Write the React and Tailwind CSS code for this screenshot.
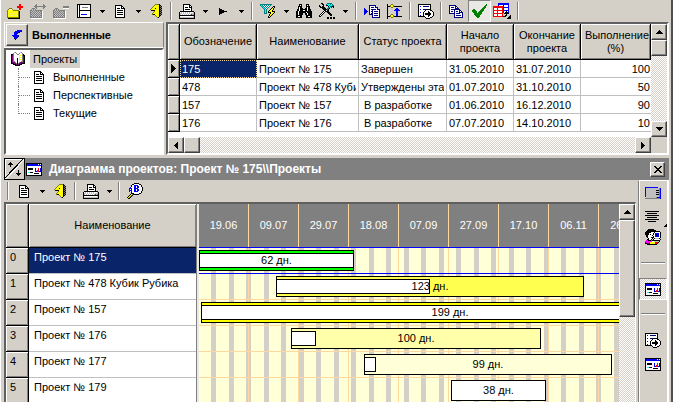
import React from "react";

const PALETTE = {
  k: "#000000", w: "#ffffff", y: "#ffff00", b: "#0000ff", n: "#000080", r: "#ff0000",
  g: "#808080", l: "#c0c0c0", t: "#008080", c: "#00ffff", G: "#008000", m: "#800080",
  M: "#ff00ff", o: "#808000", s: "#d4d0c8", v: "#eeee66",
};

function Pixels({ rows }) {
  const width = Math.max(...rows.map((r) => r.length));
  const rects = [];
  rows.forEach((row, y) => {
    let x = 0;
    while (x < row.length) {
      const ch = row[x];
      let end = x + 1;
      while (end < row.length && row[end] === ch) end += 1;
      if (ch !== ".") {
        rects.push(<rect key={`${x}-${y}`} x={x} y={y} width={end - x} height={1} fill={PALETTE[ch]} />);
      }
      x = end;
    }
  });
  return (
    <svg width={width} height={rows.length} viewBox={`0 0 ${width} ${rows.length}`} shapeRendering="crispEdges" className="shrink-0" aria-hidden="true">
      {rects}
    </svg>
  );
}

const ICONS = {
  newFolder: [
    "............rr..",
    "............rr..",
    "..........rrrrrr",
    "..........rrrrrr",
    "..ooo.......rr..",
    ".oywyo......rr..",
    "oywywyoooooo....",
    "oyyyyyyyyyyok...",
    "oyvyvyvyvyvok...",
    "oyyvyvyvyvyok...",
    "oyvyvyvyvyvok...",
    "oyyvyvyvyvyok...",
    "oyyyyyyyyyyok...",
    "ooooooooooook...",
    ".kkkkkkkkkkkk...",
  ],
  moveFolder: [
    "......g......g..",
    ".....gg......gg.",
    "....gggggggggggg",
    ".....gg......gg.",
    "..ggg.g......g..",
    ".glglg..........",
    "gglglggggggg....",
    "glglglglglggw...",
    "gglglglglglgw...",
    "glglglglglggw...",
    "gglglglglglgw...",
    "glglglglglggw...",
    "gglglglglglgw...",
    "ggggggggggggw...",
    ".wwwwwwwwwwww...",
  ],
  removeFolder: [
    "................",
    "................",
    "..........gggggg",
    "..........gggggg",
    "..ggg.....wwwwww",
    ".glglg..........",
    "gglglggggggg....",
    "glglglglglggw...",
    "gglglglglglgw...",
    "glglglglglggw...",
    "gglglglglglgw...",
    "glglglglglggw...",
    "gglglglglglgw...",
    "ggggggggggggw...",
    ".wwwwwwwwwwww...",
  ],
  form: [
    "kkkkkkkkkkkkkk",
    "kwkwwwwwwwwwwk",
    "kwkwwwwwwwwwwk",
    "kwkwwggggggwwk",
    "kwkwwwwwwwwwwk",
    "kwkwwwwwwwwwwk",
    "kwkkkkkkkkkkkk",
    "kwkwwwwwwwwwwk",
    "kwkwwwwwwwwwwk",
    "kwkwwwwwwwwwwk",
    "kwkwbbbbbbwwwk",
    "kwkwwwwwwwwwwk",
    "kwkwwwwwwwwwwk",
    "kkkkkkkkkkkkkk",
  ],
  doc: [
    "kkkkkkk...",
    "kwwwwwkk..",
    "kwwwwwkwk.",
    "kwkkkwkkkk",
    "kwwwwwwwwk",
    "kwkkkkkkwk",
    "kwwwwwwwwk",
    "kwkkkkkkwk",
    "kwwwwwwwwk",
    "kwkkkkkkwk",
    "kwwwwwwwwk",
    "kwwwwwwwwk",
    "kkkkkkkkkk",
  ],
  exit: [
    ".....ooook..",
    "....oyyyykk.",
    "...oyyyyykgk",
    "..oyyyyyykkg",
    ".oyyykyyykgk",
    "oyyyyyyyykkg",
    ".kkkkyyyykgk",
    "....oyyyykkg",
    "...oyyyyykgk",
    "..oyyyyyykkg",
    "..okkyyyykgk",
    ".....oyyykk.",
    "......oyyk..",
    ".......ok...",
  ],
  printer: [
    "....kkkkkkk.....",
    "....kwwwwwkk....",
    "....kwwwwwkwk...",
    "....kwkkkwkkk...",
    "....kwwwwwwwk...",
    "....kwkkkkkwk...",
    "....kwwwwwwwk...",
    ".kkkkkkkkkkkkkk.",
    "kwlwlwlwlwlwwwlk",
    "kllwlwlwlwlwlllk",
    "klwlwlwlwlwlrlgk",
    "kkkkkkkkkkkkkkkk",
    "kwwwwwwwwwwwwwlk",
    "kllllllllllllllk",
    "kkkkkkkkkkkkkkkk",
  ],
  play: [
    "k.......",
    "kkk.....",
    "kkkkk...",
    "kkkkkkkk",
    "kkkkk...",
    "kkk.....",
    "k.......",
  ],
  filter: [
    "tttttttttttt....",
    "tctwtwtwtwt.....",
    ".tctwtwtwt...kk.",
    "..tctwtwt...kyk.",
    "...tctwt...kyk..",
    "....tct...kyyk..",
    "....tct..kyyk...",
    "....tct.kyyykkk.",
    "....tct.kkkyyyk.",
    "....ttt...kyyk..",
    ".........kyyk...",
    ".........kyk....",
    "........kyk.....",
    "........kk......",
  ],
  binoculars: [
    "...kkk....kkk...",
    "...kwk....kwk...",
    "..kkkk....kkkk..",
    "..kwkk....kwkk..",
    "..kwkkk..kkwkk..",
    ".kkwkkkkkkkwkkk.",
    ".kkwkkkwwkkwkkk.",
    "kkwkkkkkkkkkkkkk",
    "kkwkkkkkkkwkkkkk",
    "kkwkkkk..kkwkkkk",
    "kkwkkkk..kkwkkkk",
    "kkkkkk....kkkkkk",
    "kkwwkk....kkwwkk",
    "kkkkkk....kkkkkk",
  ],
  tools: [
    "..kk....ttttt...",
    "...kk..tccctct..",
    "k...k..kkctcctt.",
    "kk.kk....kcttkk.",
    ".kkkkk...ttck.k.",
    "...kkkk.ttk.....",
    "....kkkktk......",
    ".....kkwkk......",
    "....kwkkkk......",
    "...kwk..kkk.....",
    "..kwk....kkk....",
    ".kwk......kkk...",
    "kwk........kk...",
    "kk..............",
    "........kk.kk.kk",
    "........kk.kk.kk",
  ],
  pages: [
    ".....nnnnnnn....",
    ".....nwwwwwn....",
    ".....nwnnnwnnn..",
    "b....nwwwwwwwn..",
    "bb...nwnnnnnwnnn",
    "bbb..nwwnwwwwwwn",
    "bbbb.nwnnwnnnnwn",
    "bbb..nwwnwwwwwwn",
    "bb...nwnnwnnnnwn",
    "b....nnnnwwwwwwn",
    "........nwnnnnwn",
    "........nwwwwwwn",
    "........nnnnnnnn",
  ],
  tree: [
    "k...oo.........",
    "k..oyyo........",
    "kkkoyyokkkkkkkk",
    "k...oo.........",
    "k........bb....",
    "k.......bbbb...",
    "k......bbbbbb..",
    "k........bb....",
    "k........bb....",
    "k........bb....",
    "k...oo...bb....",
    "k..oyyo..bb....",
    "kkkoyyokkkkkkkk",
    "k...oo.........",
    "k..............",
  ],
  report: [
    "kkkkkkkkkkkkk...",
    "kwwwwwwwwwwwk...",
    "kwbwwnnnnnnwk...",
    "kwwwwwwwwwwwk...",
    "kwwwwwwwwwwwk...",
    "kwbwwnnnkkkkk...",
    "kwwwwwwkwwwwkk..",
    "kwwwwwkwwwkwwwk.",
    "kwbwwkwwwwkkwwwk",
    "kwwwwkwkkkkkkwwk",
    "kwwwwkwkkkkkkwwk",
    "kwbwwkwwwwkkwwwk",
    "kkkkkkkwwwkwwwk.",
    ".......kwwwwkk..",
    "........kkkk....",
  ],
  copy: [
    "nnnnnnn........",
    "nwwwwwnn.......",
    "nwnnnwnwn......",
    "nwwwwwnnnn.....",
    "nwnnnnnnnnn....",
    "nwwwwnwwwwnn...",
    "nwnnwnwnnwnwn..",
    "nwwwwnwwwwnnnn.",
    "nnnnnnwnnnnwwn.",
    ".....nwwwwwwwn.",
    ".....nwnnnnnwn.",
    ".....nwwwwwwwn.",
    ".....nnnnnnnnn.",
  ],
  check: [
    "..............G",
    ".............GG",
    "............GG.",
    "...........GGG.",
    "..........GGG..",
    ".GG......GGG...",
    "GGGG....GGGG...",
    "GGGGG..GGGG....",
    ".GGGG.GGGG.....",
    "..GGGGGGGG.....",
    "..GGGGGGG......",
    "...GGGGG.......",
    "....GGGG.......",
    ".....GG........",
  ],
  tables: [
    ".....bbbbbbbbbbb...",
    ".....bbbbbbbbbbb...",
    ".....bwwwwbwwwwb...",
    "rrrrrrrrrrbwwwwb...",
    "rrrrrrrrrrbbbbbb...",
    "rwwwrwwwwrbwwwwb...",
    "rwwwrwwwwrbwwwwb...",
    "rrrrrrrrrrbbbbbb...",
    "rwwwrwwwwrbwwkwb...",
    "rwwwrwwwwrbwkkkb...",
    "rrrrrrrrrr.kkkkk...",
    "rwwwrwwwwr...k.....",
    "rwwwrwwwwr..kk...k.",
    "rrrrrrrrrrkkk...kk.",
    "...............kkk.",
    "..............kkkk.",
  ],
  book: [
    "....lg....lg...",
    "...gwwg..gwwg..",
    ".kkgwwwggwwwgk.",
    ".kmgwwwwwyywgkk",
    ".kmgwwwwwywwgmk",
    ".kmgwwwwwyywgmk",
    ".kmgwwwkwywwgmk",
    ".kmgwwwkwyywgmk",
    ".kmgwwwkwywwgmk",
    ".kmggwwkwwwggmk",
    ".kmmmgwkwgmmmmk",
    ".kkkmmgkgmmkkkk",
    "...kkkmkmkkk...",
    ".....kkkkk.....",
  ],
  funnelArrow: [
    ".....bbbbb.",
    "...bbbbbbn.",
    "..bbbbnn...",
    "..bbbn.....",
    "..bbb......",
    "bbbbbbb....",
    ".bbbbbn....",
    "..bbbn.....",
    "..nbb......",
    "...n.......",
  ],
  chart: [
    "kkkkkkkkkkkkkkkk",
    "kbbbbbbbbbbbwbwk",
    "kbbbbbbbbbbbbbbk",
    "kwwwwwwwwwwwwwwk",
    "kwwwwwwwwwwwwwwk",
    "kwkkkkkwwbwwrwbk",
    "kwkkkkkwwbwwrwbk",
    "kwwwwwwwwbwrrwbk",
    "kwwwwwwwwbbrrbbk",
    "kwcckkkwwwwwwwwk",
    "kwwwwwwwkkkkkwwk",
    "kwwwwwwwwwwwwwwk",
    "kkkkkkkkkkkkkkkk",
  ],
  find: [
    ".......kkkkk....",
    ".....kkwwwwwkk..",
    "....kwwbbbbwwwk.",
    "....kwwbbwbbwwk.",
    "...bwwwbbwbbwwwk",
    "..bbbwwbbbbwwwwk",
    "..bwbwwbbwbbwwwk",
    "..bbbwwbbwbbwwwk",
    "..bwbwwbbbbwwwk.",
    "....kwwwwwwwwwk.",
    "....kkkwwwwwkk..",
    "...kyokkkkkk....",
    "..kyok..........",
    ".kyok...........",
    "kyok............",
    ".kk.............",
  ],
  card: [
    "bbbbbbbbbbbbb...",
    "blllllllllllllgb",
    "blllllllllllllgb",
    "bllllllllllkkkgb",
    "blllllllllllllgb",
    "bllllllllllkkkgb",
    "blllllllllllllgb",
    "bllllllllllkkkgb",
    "blllllllllllllgb",
    "blllllllllllllgb",
    ".llllllllllgbbbb",
    "gggggggggggggggb",
  ],
  lines: [
    "kkkkkkkkkkkkkk",
    "..............",
    "..kkkkkkkkkk..",
    "..............",
    "kkkkkkkkkkkkkk",
    "..............",
    "..kkkkkkkkkk..",
    "..............",
    "kkkkkkkkkkkkkk",
    "..............",
    "...kkkkkkkk...",
  ],
  person: [
    "...kkkkkk.......",
    "..kkkkkkkkk.....",
    ".kkkkkkkkkkkkkk.",
    "kkkkkkwwwkwwwwwk",
    "kkkkwwwwkwbbbbwk",
    "kkkkwkwwkwbnnbwk",
    ".kkwwwwkwwbnnbwk",
    ".kkwwwwwkwbbbbwk",
    "..kwwwkkkwwwwwwk",
    "...kwwwk.kllllk.",
    "..kkwwk.kwwwwwwk",
    ".MMkkkMkkkkkkkk.",
    "MMMMMMMwwlllllk.",
    "mMMMMyyyyyrrrk..",
    "kkmmmyyyyyrrk...",
    "..kkkkkkkkkk....",
  ],
};

const caretRows = ["kkkkk", ".kkk.", "..k.."];

function ToolButton({ icon, label, pressed }) {
  return (
    <button
      type="button"
      aria-label={label}
      className={
        pressed
          ? "flex h-[22px] w-[23px] shrink-0 items-center justify-center border border-b-white border-l-[#808080] border-r-white border-t-[#808080] bg-[#eae8e3]"
          : "flex h-[22px] w-[23px] shrink-0 items-center justify-center"
      }
    >
      <Pixels rows={ICONS[icon]} />
    </button>
  );
}

function Caret({ label }) {
  return (
    <button type="button" aria-label={label} className="flex h-[22px] w-[13px] shrink-0 items-center justify-center pl-px">
      <Pixels rows={caretRows} />
    </button>
  );
}

function Divider() {
  return (
    <div className="flex h-[22px] w-2 shrink-0 items-center justify-center">
      <div className="h-[18px] w-[2px] border-l border-l-[#808080] bg-white" />
    </div>
  );
}

const ARROWS = {
  up: ["...k...", "..kkk..", ".kkkkk.", "kkkkkkk"],
  down: ["kkkkkkk", ".kkkkk.", "..kkk..", "...k..."],
  left: ["...k", "..kk", ".kkk", "kkkk", ".kkk", "..kk", "...k"],
  right: ["k...", "kk..", "kkk.", "kkkk", "kkk.", "kk..", "k..."],
};

function ScrollButton({ dir, label }) {
  return (
    <button
      type="button"
      aria-label={label}
      className="flex size-4 shrink-0 items-center justify-center border border-b-[#404040] border-l-white border-r-[#404040] border-t-white bg-[#d4d0c8] shadow-[inset_-1px_-1px_0_#808080]"
    >
      <Pixels rows={ARROWS[dir]} />
    </button>
  );
}

const track = "bg-[repeating-conic-gradient(#ffffff_0_25%,#d4d0c8_0_50%)] bg-[length:2px_2px]";
const raised = "border border-b-[#404040] border-l-white border-r-[#404040] border-t-white bg-[#d4d0c8] shadow-[inset_-1px_-1px_0_#808080]";
const sunken = "border-2 border-b-white border-l-[#606060] border-r-white border-t-[#606060]";

const treeItems = ["Выполненные", "Перспективные", "Текущие"];

function TreePanel() {
  return (
    <aside className="flex w-40 shrink-0 flex-col">
      <div className="flex h-[26px] shrink-0 items-center border border-l-white border-t-white border-b-white border-r-[#808080] pl-px">
        <button type="button" aria-label="Свернуть" className={`flex size-[22px] shrink-0 items-center justify-center ${raised}`}>
          <Pixels rows={ICONS.funnelArrow} />
        </button>
        <h2 className="pl-1 font-bold">Выполненные</h2>
      </div>
      <div className={`min-h-0 flex-1 bg-white ${sunken}`}>
        <div className="flex h-[18px] items-center pl-1">
          <Pixels rows={ICONS.book} />
          <span className="ml-[5px] flex h-[18px] items-center bg-[#d4d0c8] px-[3px]">Проекты</span>
        </div>
        <ul className="ml-3">
          {treeItems.map((item, i) => (
            <li key={item} className="flex h-[18px]">
              <span className={`w-px border-l border-dotted border-[#808080] ${i === treeItems.length - 1 ? "h-[10px]" : "h-[18px]"}`} />
              <span className="mt-[9px] h-px w-[11px] border-t border-dotted border-[#808080]" />
              <span className="ml-1 flex items-center gap-[9px]">
                <Pixels rows={ICONS.doc} />
                {item}
              </span>
            </li>
          ))}
        </ul>
      </div>
    </aside>
  );
}

const projects = [
  ["175", "Проект № 175", "Завершен", "31.05.2010", "31.07.2010", "100"],
  ["478", "Проект № 478 Кубик", "Утверждены эта", "01.07.2010", "31.10.2010", "50"],
  ["157", "Проект № 157", "\u00a0В разработке", "01.06.2010", "16.12.2010", "90"],
  ["176", "Проект № 176", "\u00a0В разработке", "07.07.2010", "14.10.2010", "10"],
];

const headers = ["Обозначение", "Наименование", "Статус проекта", "Начало проекта", "Окончание проекта", "Выполнение (%)"];

const headCell =
  "h-9 overflow-hidden border-b border-r border-black bg-[#d4d0c8] px-1 text-center font-normal leading-[13px] shadow-[inset_1px_1px_0_#ffffff,inset_-1px_-1px_0_#808080]";

function ProjectsGrid() {
  return (
    <section className={`flex min-w-0 flex-1 flex-col bg-white ${sunken}`}>
      <div className="flex min-h-0 flex-1">
        <div className="min-w-0 flex-1 overflow-hidden">
          <table className="w-full table-fixed border-separate border-spacing-0">
            <colgroup>
              <col className="w-3" />
              <col className="w-[77px]" />
              <col className="w-[102px]" />
              <col className="w-[88px]" />
              <col className="w-[67px]" />
              <col className="w-[67px]" />
              <col />
            </colgroup>
            <thead>
              <tr>
                <th className={headCell} aria-label="Текущая запись" />
                {headers.map((h) => (
                  <th key={h} className={headCell}>{h}</th>
                ))}
              </tr>
            </thead>
            <tbody>
              {projects.map((row, r) => (
                <tr key={row[0]}>
                  <td className="h-[18px] border-b border-r border-black bg-[#d4d0c8] pl-[3px] shadow-[inset_1px_1px_0_#ffffff,inset_-1px_-1px_0_#808080]">
                    {r === 0 && <Pixels rows={["k.....", "kk....", "kkk...", "kkkk..", "kkkkk.", "kkkk..", "kkk...", "kk....", "k....."]} />}
                  </td>
                  {row.map((cell, c) => (
                    <td
                      key={headers[c]}
                      className={
                        r === 0 && c === 0
                          ? "h-[18px] border border-dotted border-[#f5db95] bg-[#0a246a] pl-px text-white"
                          : c === 5
                            ? "h-[18px] border-b border-[#c0c0c0] pr-px text-right"
                            : "h-[18px] border-b border-r border-[#c0c0c0] px-[2px]"
                      }
                    >
                      <div className="h-4 overflow-hidden whitespace-nowrap leading-4">{cell}</div>
                    </td>
                  ))}
                </tr>
              ))}
            </tbody>
          </table>
        </div>
        <div className={`flex w-4 shrink-0 flex-col ${track}`}>
          <ScrollButton dir="up" label="Вверх" />
          <div className={`h-4 ${raised}`} />
          <div className="flex-1" />
          <ScrollButton dir="down" label="Вниз" />
        </div>
      </div>
      <div className="flex h-4 shrink-0">
        <div className={`flex flex-1 ${track}`}>
          <ScrollButton dir="left" label="Влево" />
          <div className={`w-4 ${raised}`} />
          <div className="flex-1" />
          <ScrollButton dir="right" label="Вправо" />
        </div>
        <div className="w-4 bg-[#d4d0c8]" />
      </div>
    </section>
  );
}

const DAY = 2.5;
const tasks = [
  { name: "Проект № 175", start: 0, days: 62, done: 62, fill: "bg-[#00ff00]" },
  { name: "Проект № 478 Кубик Рубика", start: 77, days: 123, done: 61.5, fill: "bg-[#ffff50]" },
  { name: "Проект № 157", start: 2, days: 199, done: 199, fill: "bg-[#ffff00]" },
  { name: "Проект № 176", start: 92, days: 100, done: 10, fill: "bg-[#ffffaa]" },
  { name: "Проект № 177", start: 165, days: 99, done: 4.9, fill: "bg-[#ffffd8]" },
  { name: "Проект № 179", start: 252, days: 38, done: 0, fill: "bg-white" },
];
const dates = ["19.06", "09.07", "29.07", "18.08", "07.09", "27.09", "17.10", "06.11", "26.11"];

function TaskTable() {
  return (
    <table className="w-[190px] shrink-0 table-fixed border-separate border-spacing-0 self-start">
      <colgroup>
        <col className="w-[23px]" />
        <col />
      </colgroup>
      <thead>
        <tr>
          <th className="h-11 border-b border-r border-black bg-[#d4d0c8] shadow-[inset_1px_1px_0_#ffffff,inset_-1px_-1px_0_#808080]" aria-label="Номер" />
          <th className="h-11 border-b border-black bg-[#d4d0c8] text-center font-normal shadow-[inset_1px_1px_0_#ffffff,inset_-1px_-1px_0_#808080]">Наименование</th>
        </tr>
      </thead>
      <tbody>
        {tasks.map((task, i) => (
          <tr key={task.name}>
            <td className="h-[26px] border-b border-r border-black bg-[#d4d0c8] pl-1 pt-px align-top leading-4 shadow-[inset_1px_1px_0_#ffffff,inset_-1px_-1px_0_#808080]">{i}</td>
            <td
              className={
                i === 0
                  ? "h-[26px] border-b border-[#c0c0c0] bg-[#0a246a] pl-[5px] pt-px align-top leading-4 text-white"
                  : "h-[26px] border-b border-[#c0c0c0] bg-white pl-[5px] pt-px align-top leading-4"
              }
            >
              {task.name}
            </td>
          </tr>
        ))}
      </tbody>
    </table>
  );
}

function TaskBar({ task }) {
  const complete = task.done === task.days;
  return (
    <div
      className={`absolute top-[2px] flex h-[21px] items-center justify-center border border-black ${task.fill}`}
      style={{ left: task.start, width: Math.round(task.days * DAY) }}
    >
      {task.done > 0 && (
        <div
          className={`absolute inset-y-[2px] left-0 border-y border-black bg-white ${complete ? "right-0" : "border-r"}`}
          style={complete ? undefined : { width: Math.round(task.done * DAY) - 1 }}
        />
      )}
      <span className="relative">{task.days} дн.</span>
    </div>
  );
}

function Timeline() {
  return (
    <div className="min-w-0 flex-1 overflow-hidden bg-[#ffffd8]">
      <div className="flex h-11 border-b border-b-[#0000ff] bg-[#808080] text-white">
        {dates.map((d) => (
          <div key={d} className="flex w-[50px] shrink-0 items-center justify-center border-r border-[#ffd8a0]">{d}</div>
        ))}
      </div>
      <div className="bg-[linear-gradient(90deg,transparent_49px,#ffd8a0_49px),linear-gradient(90deg,transparent_12px,#d4d0c8_12px,#d4d0c8_17px,transparent_17px,transparent_30px,#d4d0c8_30px,#d4d0c8_35px)] bg-[length:50px_100%,35px_100%]">
        {tasks.map((task, i) => (
          <div key={task.name} className={`relative h-[26px] border-b ${i === 0 ? "border-[#0000ff]" : "border-[#ffd8a0]"}`}>
            <TaskBar task={task} />
          </div>
        ))}
      </div>
    </div>
  );
}

function Sidebar() {
  return (
    <nav className="flex w-[31px] shrink-0 flex-col items-center border-l border-r-2 border-t border-l-[#808080] border-r-white border-t-white shadow-[inset_1px_0_0_#ffffff]">
      <button type="button" aria-label="Карточка" className="flex h-6 w-full shrink-0 items-center justify-center"><Pixels rows={ICONS.card} /></button>
      <button type="button" aria-label="Выравнивание" className="flex h-[22px] w-full shrink-0 items-center justify-end">
        <Pixels rows={ICONS.lines} />
        <span className="flex h-full items-end pl-1"><Pixels rows={["...k", "..kk", ".kkk"]} /></span>
      </button>
      <button type="button" aria-label="Исполнитель" className="flex h-5 w-full shrink-0 items-center justify-center"><Pixels rows={ICONS.person} /></button>
      <div className="mt-[15px] h-[2px] w-6 shrink-0 border-t border-[#808080] bg-white" />
      <button type="button" aria-label="Диаграмма" className={`mt-[14px] flex h-[22px] w-full shrink-0 items-center justify-center border border-b-white border-l-[#808080] border-r-white border-t-[#808080] ${track}`}>
        <Pixels rows={ICONS.chart} />
      </button>
      <div className="mt-[13px] h-[2px] w-6 shrink-0 border-t border-[#808080] bg-white" />
      <button type="button" aria-label="Отчет" className="mt-[14px] flex h-[22px] w-full shrink-0 items-center justify-center"><Pixels rows={ICONS.report} /></button>
      <button type="button" aria-label="Окно диаграммы" className="flex h-[26px] w-full shrink-0 items-center justify-center"><Pixels rows={ICONS.chart} /></button>
    </nav>
  );
}

function SwapButton() {
  return (
    <button type="button" aria-label="Поменять местами" className="shrink-0 bg-black p-px">
      <svg width="19" height="20" viewBox="0 0 19 20" shapeRendering="crispEdges" aria-hidden="true">
        <rect width="19" height="20" fill="#d4d0c8" />
        <path d="M0.5 20V0.5H19" fill="none" stroke="#fff" />
        <path d="M0 19L18 0" stroke="#000" />
        <path d="M1 20L19 1" stroke="#fff" />
        <path d="M5 3h1v5h-1zM4 4h3v1h-3zM3 5h5v1h-5zM13 11h1v6h-1zM11 14h5v1h-5zM12 15h3v1h-3z" fill="#000" />
      </svg>
    </button>
  );
}

export default function App() {
  return (
    <div className="flex h-screen flex-col overflow-hidden border-r-2 border-r-[#505050] bg-[#d4d0c8] font-['Liberation_Sans',Arial,sans-serif] text-[11px] leading-[13px] text-black shadow-[inset_1px_0_0_#ffffff]">
      <header className="flex h-[22px] shrink-0 pl-[3px]">
        <div className="flex">
          <ToolButton icon="newFolder" label="Создать папку" />
          <ToolButton icon="moveFolder" label="Переместить папку" />
          <ToolButton icon="removeFolder" label="Удалить папку" />
          <ToolButton icon="form" label="Форма" />
          <Caret label="Варианты формы" />
          <ToolButton icon="doc" label="Документ" />
          <Caret label="Варианты документа" />
          <ToolButton icon="exit" label="Выход" />
        </div>
        <Divider />
        <div className="flex pr-px">
          <ToolButton icon="printer" label="Печать" />
          <Caret label="Варианты печати" />
          <ToolButton icon="play" label="Выполнить" />
          <Caret label="Варианты выполнения" />
        </div>
        <Divider />
        <div className="flex pr-px">
          <ToolButton icon="filter" label="Фильтр" />
          <Caret label="Варианты фильтра" />
          <ToolButton icon="binoculars" label="Поиск" />
          <ToolButton icon="tools" label="Инструменты" />
          <Caret label="Набор инструментов" />
        </div>
        <Divider />
        <ToolButton icon="pages" label="Страницы" />
        <ToolButton icon="tree" label="Дерево" />
        <Divider />
        <ToolButton icon="report" label="Отчет" />
        <Divider />
        <ToolButton icon="copy" label="Копировать" />
        <ToolButton icon="check" label="Применить" pressed />
        <ToolButton icon="tables" label="Таблицы" />
        <Divider />
      </header>

      <main className="flex min-h-0 flex-1 flex-col pl-1 pr-[2px]">
        <div className="flex h-[133px] shrink-0 gap-[2px]">
          <TreePanel />
          <ProjectsGrid />
        </div>

        <section className="mt-[3px] flex min-h-0 flex-1 flex-col">
          <div className="flex h-[22px] shrink-0 items-center bg-[#808080] pr-1 text-white">
            <SwapButton />
            <span className="pl-px"><Pixels rows={ICONS.chart} /></span>
            <h2 className="min-w-0 flex-1 truncate pl-[7px] text-[12px] font-bold leading-[14px]">Диаграмма проектов: Проект № 175\\Проекты</h2>
            <button type="button" aria-label="Закрыть" className={`flex size-[15px] items-center justify-center ${raised}`}>
              <Pixels rows={["kk....kk", ".kk..kk.", "..kkkk..", "...kk...", "..kkkk..", ".kk..kk.", "kk....kk"]} />
            </button>
          </div>

          <div className="flex min-h-0 flex-1 gap-[2px]">
            <div className="flex min-w-0 flex-1 flex-col">
              <div className="flex h-[22px] shrink-0">
                <Divider />
                <ToolButton icon="doc" label="Документ" />
                <Caret label="Варианты документа" />
                <ToolButton icon="exit" label="Выход" />
                <Divider />
                <ToolButton icon="printer" label="Печать" />
                <Caret label="Варианты печати" />
                <Divider />
                <ToolButton icon="find" label="Найти" />
              </div>
              <div className="flex min-h-0 flex-1 overflow-hidden border-l-2 border-r border-t-2 border-l-[#606060] border-r-white border-t-[#606060] bg-white">
                <TaskTable />
                <div className="w-[3px] shrink-0 border-l border-l-[#808080] bg-[#eae8e3]" />
                <Timeline />
                <div className={`flex w-4 shrink-0 flex-col ${track}`}>
                  <ScrollButton dir="up" label="Вверх" />
                  <div className={`h-[97px] shrink-0 ${raised}`} />
                </div>
              </div>
            </div>
            <Sidebar />
          </div>
        </section>
      </main>
    </div>
  );
}
